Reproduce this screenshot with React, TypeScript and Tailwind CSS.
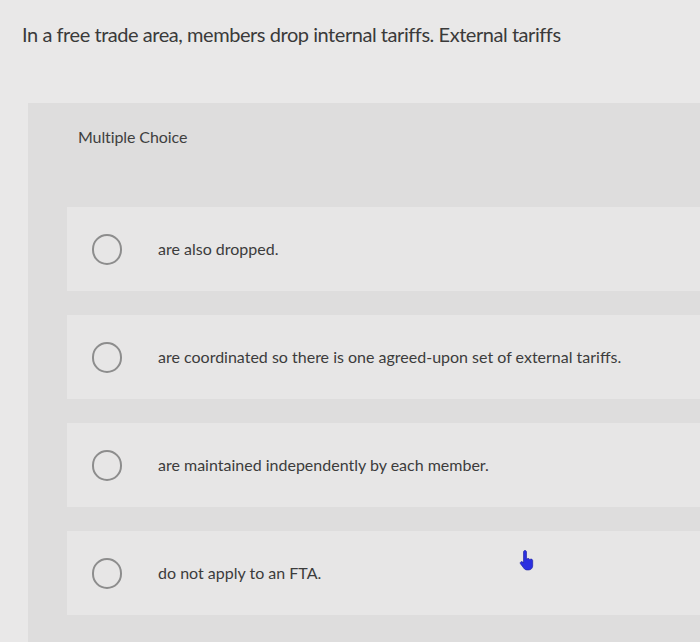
import React from 'react';

const options = [
  'are also dropped.',
  'are coordinated so there is one agreed-upon set of external tariffs.',
  'are maintained independently by each member.',
  'do not apply to an FTA.',
];

function HandCursor() {
  return (
    <svg width="16" height="22" viewBox="0 0 16 22" className="absolute left-[519px] top-[549px]">
      <path
        d="M6 1.5c.9 0 1.5.6 1.5 1.5v7.2c.3-.5.9-.8 1.5-.8 1 0 1.6.6 1.7 1.3.3-.4.8-.6 1.4-.6.9 0 1.6.7 1.6 1.6V17c0 2.3-1.9 4-4.2 4H8.3c-1.3 0-2.5-.6-3.3-1.6L1.6 15c-.6-.7-.5-1.6.2-2.1.6-.5 1.5-.4 2 .2l.7.9V3C4.5 2.1 5.1 1.5 6 1.5z"
        fill="#2b2fe0"
        stroke="#1a1c9c"
        strokeWidth="0.6"
      />
    </svg>
  );
}

export default function App() {
  return (
    <div
      className="relative w-[700px] h-[642px] overflow-hidden bg-[#e9e8e8] text-[#3a3a3a]"
      style={{ fontFamily: 'Lato, "Open Sans", sans-serif' }}
    >
      <p className="pt-[21px] pl-[22px] text-[20px] leading-[26px] tracking-[-0.45px]">
        In a free trade area, members drop internal tariffs. External tariffs
      </p>

      <div className="mt-[56px] ml-[28px] h-[600px] bg-[#dedddd] pt-[24px] pl-[39px]">
        <p className="pl-[11px] text-[16px] leading-[20px] tracking-[-0.1px] text-[#3f3f3f]">
          Multiple Choice
        </p>
        <div className="mt-[60px] flex flex-col gap-[24px]">
          {options.map((opt) => (
            <div
              key={opt}
              className="flex h-[84px] items-center gap-[36px] bg-[#e7e6e6] pl-[25px]"
            >
              <span className="h-[31px] w-[30px] shrink-0 rounded-full border-2 border-[#8d8d8d]" />
              <span className="text-[16px] tracking-[0px] text-[#3c3c3c]">{opt}</span>
            </div>
          ))}
        </div>
      </div>

      <HandCursor />
    </div>
  );
}
